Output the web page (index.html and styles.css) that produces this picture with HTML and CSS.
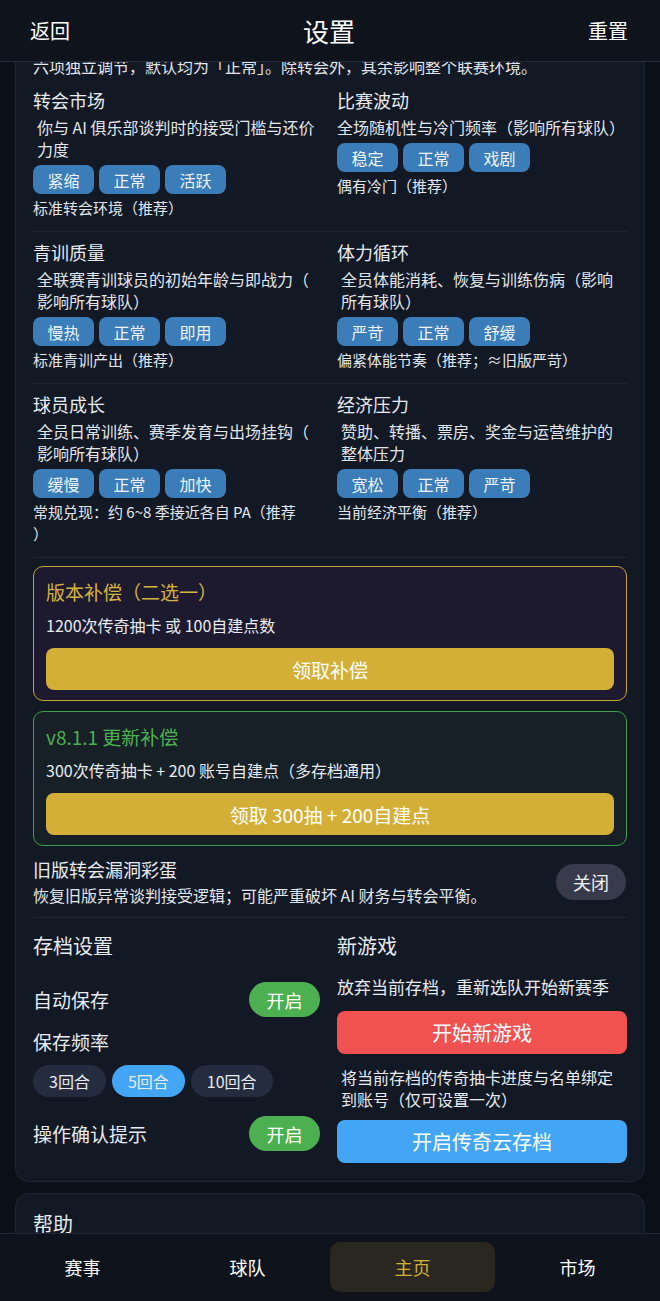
FILE: index.html
```html
<!DOCTYPE html>
<html>

<head>
	<meta charset="utf-8">
	<title>设置</title>
	<link rel="stylesheet" href="styles.css">
</head>

<body>
	<div class="topbar">
		<span class="back">返回</span>
		<span class="title">设置</span>
		<span class="reset">重置</span>
	</div>

	<div class="main">
		<div class="card">
			<p class="intro">六项独立调节，默认均为「正常」。除转会外，其余影响整个联赛环境。</p>

			<div class="env-row">
				<div class="env-item">
					<h3>转会市场</h3>
					<p class="desc">你与 AI 俱乐部谈判时的接受门槛与还价力度</p>
					<div class="chips"><span>紧缩</span><span>正常</span><span>活跃</span></div>
					<p class="hint">标准转会环境（推荐）</p>
				</div>
				<div class="env-item">
					<h3>比赛波动</h3>
					<p class="desc flat">全场随机性与冷门频率（影响所有球队）</p>
					<div class="chips"><span>稳定</span><span>正常</span><span>戏剧</span></div>
					<p class="hint">偶有冷门（推荐）</p>
				</div>
			</div>

			<div class="env-row">
				<div class="env-item">
					<h3>青训质量</h3>
					<p class="desc">全联赛青训球员的初始年龄与即战力（影响所有球队）</p>
					<div class="chips"><span>慢热</span><span>正常</span><span>即用</span></div>
					<p class="hint">标准青训产出（推荐）</p>
				</div>
				<div class="env-item">
					<h3>体力循环</h3>
					<p class="desc">全员体能消耗、恢复与训练伤病（影响所有球队）</p>
					<div class="chips"><span>严苛</span><span>正常</span><span>舒缓</span></div>
					<p class="hint">偏紧体能节奏（推荐；≈旧版严苛）</p>
				</div>
			</div>

			<div class="env-row">
				<div class="env-item">
					<h3>球员成长</h3>
					<p class="desc">全员日常训练、赛季发育与出场挂钩（影响所有球队）</p>
					<div class="chips"><span>缓慢</span><span>正常</span><span>加快</span></div>
					<p class="hint">常规兑现：约 6~8 季接近各自 PA（推荐<br>）</p>
				</div>
				<div class="env-item">
					<h3>经济压力</h3>
					<p class="desc">赞助、转播、票房、奖金与运营维护的整体压力</p>
					<div class="chips"><span>宽松</span><span>正常</span><span>严苛</span></div>
					<p class="hint">当前经济平衡（推荐）</p>
				</div>
			</div>

			<div class="gift">
				<h4>版本补偿（二选一）</h4>
				<p>1200次传奇抽卡 或 100自建点数</p>
				<button>领取补偿</button>
			</div>

			<div class="gift green">
				<h4>v8.1.1 更新补偿</h4>
				<p>300次传奇抽卡 + 200 账号自建点（多存档通用）</p>
				<button>领取 300抽 + 200自建点</button>
			</div>

			<div class="egg">
				<div>
					<h3>旧版转会漏洞彩蛋</h3>
					<p>恢复旧版异常谈判接受逻辑；可能严重破坏 AI 财务与转会平衡。</p>
				</div>
				<span class="pill-off">关闭</span>
			</div>

			<div class="save">
				<div class="save-col">
					<h3>存档设置</h3>
					<div class="opt-row">
						<span>自动保存</span>
						<span class="toggle">开启</span>
					</div>
					<p class="label">保存频率</p>
					<div class="freq"><span>3回合</span><span class="on">5回合</span><span>10回合</span></div>
					<div class="opt-row last">
						<span>操作确认提示</span>
						<span class="toggle">开启</span>
					</div>
				</div>
				<div class="save-col">
					<h3>新游戏</h3>
					<p class="ng-desc">放弃当前存档，重新选队开始新赛季</p>
					<button class="btn red">开始新游戏</button>
					<p class="ng-desc2">将当前存档的传奇抽卡进度与名单绑定到账号（仅可设置一次）</p>
					<button class="btn blue">开启传奇云存档</button>
				</div>
			</div>
		</div>

		<div class="card help">
			<h3 class="help-title">帮助</h3>
		</div>
	</div>

	<div class="tabbar">
		<span>赛事</span>
		<span>球队</span>
		<span class="active">主页</span>
		<span>市场</span>
	</div>
</body>

</html>
```

FILE: styles.css
```css
* {
	margin: 0;
	padding: 0;
	box-sizing: border-box;
}

body {
	background: #0b0f17;
	color: #e8ecf2;
	font-family: "Noto Sans CJK SC", "Noto Sans", sans-serif;
}

h2,
h3,
h4 {
	font-weight: normal;
}

button {
	border: none;
	font-family: inherit;
	color: #fff;
	cursor: pointer;
}

/* 顶部栏 */
.topbar {
	position: fixed;
	top: 0;
	left: 0;
	right: 0;
	height: 62px;
	background: #0f131c;
	border-bottom: 1px solid #252c39;
	display: flex;
	align-items: center;
	justify-content: space-between;
	padding: 0 32px 0 30px;
	z-index: 10;
	color: #fff;
}

.topbar .back,
.topbar .reset {
	font-size: 20px;
}

.topbar .title {
	font-size: 26px;
}

.main {
	padding: 34px 15px 90px;
}

.card {
	background: #121824;
	border: 1px solid #1e2634;
	border-radius: 14px;
	padding: 16px 17px 18px;
}

.card + .card {
	margin-top: 11px;
}

.card.help {
	min-height: 200px;
}

.intro {
	font-size: 16px;
	line-height: 22px;
	margin: 4px 0 3px;
	color: #e2e7ee;
}

/* 联赛环境 */
.env-row {
	display: grid;
	grid-template-columns: 1fr 1fr;
	column-gap: 14px;
	padding: 8px 0 12px;
	border-bottom: 1px solid #1f2633;
}

.env-item h3 {
	font-size: 18px;
	line-height: 24px;
}

.env-item .desc {
	font-size: 16px;
	line-height: 22px;
	margin-top: 4px;
	padding-left: 4px;
	color: #e2e7ee;
	line-break: anywhere;
}

.env-item .desc.flat {
	padding-left: 0;
}

.chips {
	display: flex;
	gap: 5px;
	margin-top: 5px;
}

.chips span {
	width: 61px;
	height: 29px;
	border-radius: 8px;
	background: #3b7db8;
	color: #eef4fa;
	font-size: 16px;
	display: flex;
	align-items: center;
	justify-content: center;
}

.hint {
	font-size: 15px;
	line-height: 22px;
	margin-top: 3px;
	color: #e2e7ee;
}

/* 补偿 */
.gift {
	margin-top: 8px;
	border: 1px solid #c9a23a;
	background: #1d1a2f;
	border-radius: 10px;
	padding: 12px 12px 10px;
}

.gift h4 {
	font-size: 19px;
	line-height: 26px;
	color: #d6b23e;
}

.gift p {
	font-size: 16px;
	line-height: 22px;
	margin-top: 9px;
}

.gift button {
	display: block;
	width: 100%;
	height: 42px;
	margin-top: 12px;
	background: #d4af37;
	border-radius: 8px;
	font-size: 19px;
}

.gift.green {
	margin-top: 10px;
	border-color: #3f9f4a;
	background: #172027;
}

.gift.green h4 {
	color: #4caf50;
}

/* 彩蛋 */
.egg {
	display: flex;
	justify-content: space-between;
	align-items: center;
	padding: 11px 0 11px;
	border-bottom: 1px solid #1f2633;
}

.egg h3 {
	font-size: 18px;
	line-height: 24px;
}

.egg p {
	font-size: 16px;
	line-height: 22px;
	margin-top: 3px;
	color: #e2e7ee;
}

.pill-off {
	width: 70px;
	height: 36px;
	margin-right: 1px;
	border-radius: 18px;
	background: #393b4d;
	color: #eef0f4;
	font-size: 18px;
	display: flex;
	align-items: center;
	justify-content: center;
}

/* 存档设置 / 新游戏 */
.save {
	display: grid;
	grid-template-columns: 1fr 1fr;
	column-gap: 14px;
	padding-top: 14px;
}

.save h3 {
	font-size: 20px;
	line-height: 28px;
}

.opt-row {
	display: flex;
	justify-content: space-between;
	align-items: center;
	margin-top: 22px;
	padding-right: 3px;
	font-size: 19px;
}

.opt-row.last {
	margin-top: 19px;
}

.toggle {
	width: 71px;
	height: 35px;
	border-radius: 18px;
	background: #4caf50;
	color: #fff;
	font-size: 18px;
	display: flex;
	align-items: center;
	justify-content: center;
}

.save .label {
	font-size: 19px;
	line-height: 26px;
	margin-top: 12px;
}

.freq {
	display: flex;
	gap: 6px;
	margin-top: 10px;
}

.freq span {
	height: 32px;
	line-height: 32px;
	padding: 0 16px;
	border-radius: 16px;
	background: #262c40;
	font-size: 16px;
}

.freq .on {
	background: #42a5f5;
}

.ng-desc {
	font-size: 17px;
	line-height: 24px;
	margin-top: 15px;
}

.ng-desc2 {
	font-size: 16px;
	line-height: 22px;
	margin-top: 12px;
	padding-left: 4px;
}

.btn {
	display: block;
	width: 100%;
	height: 43px;
	border-radius: 8px;
	font-size: 20px;
}

.btn.red {
	margin-top: 12px;
	background: #f05252;
}

.btn.blue {
	margin-top: 10px;
	background: #42a5f5;
}

.help-title {
	font-size: 20px;
	line-height: 28px;
}

/* 底部导航 */
.tabbar {
	position: fixed;
	left: 0;
	right: 0;
	bottom: 0;
	height: 68px;
	background: #0e121b;
	border-top: 1px solid #1f2737;
	display: grid;
	grid-template-columns: repeat(4, 1fr);
	padding: 8px 0 9px;
	z-index: 10;
}

.tabbar span {
	display: flex;
	align-items: center;
	justify-content: center;
	font-size: 18px;
	color: #fff;
	border-radius: 10px;
}

.tabbar .active {
	background: #29271f;
	color: #d4af37;
}
```
